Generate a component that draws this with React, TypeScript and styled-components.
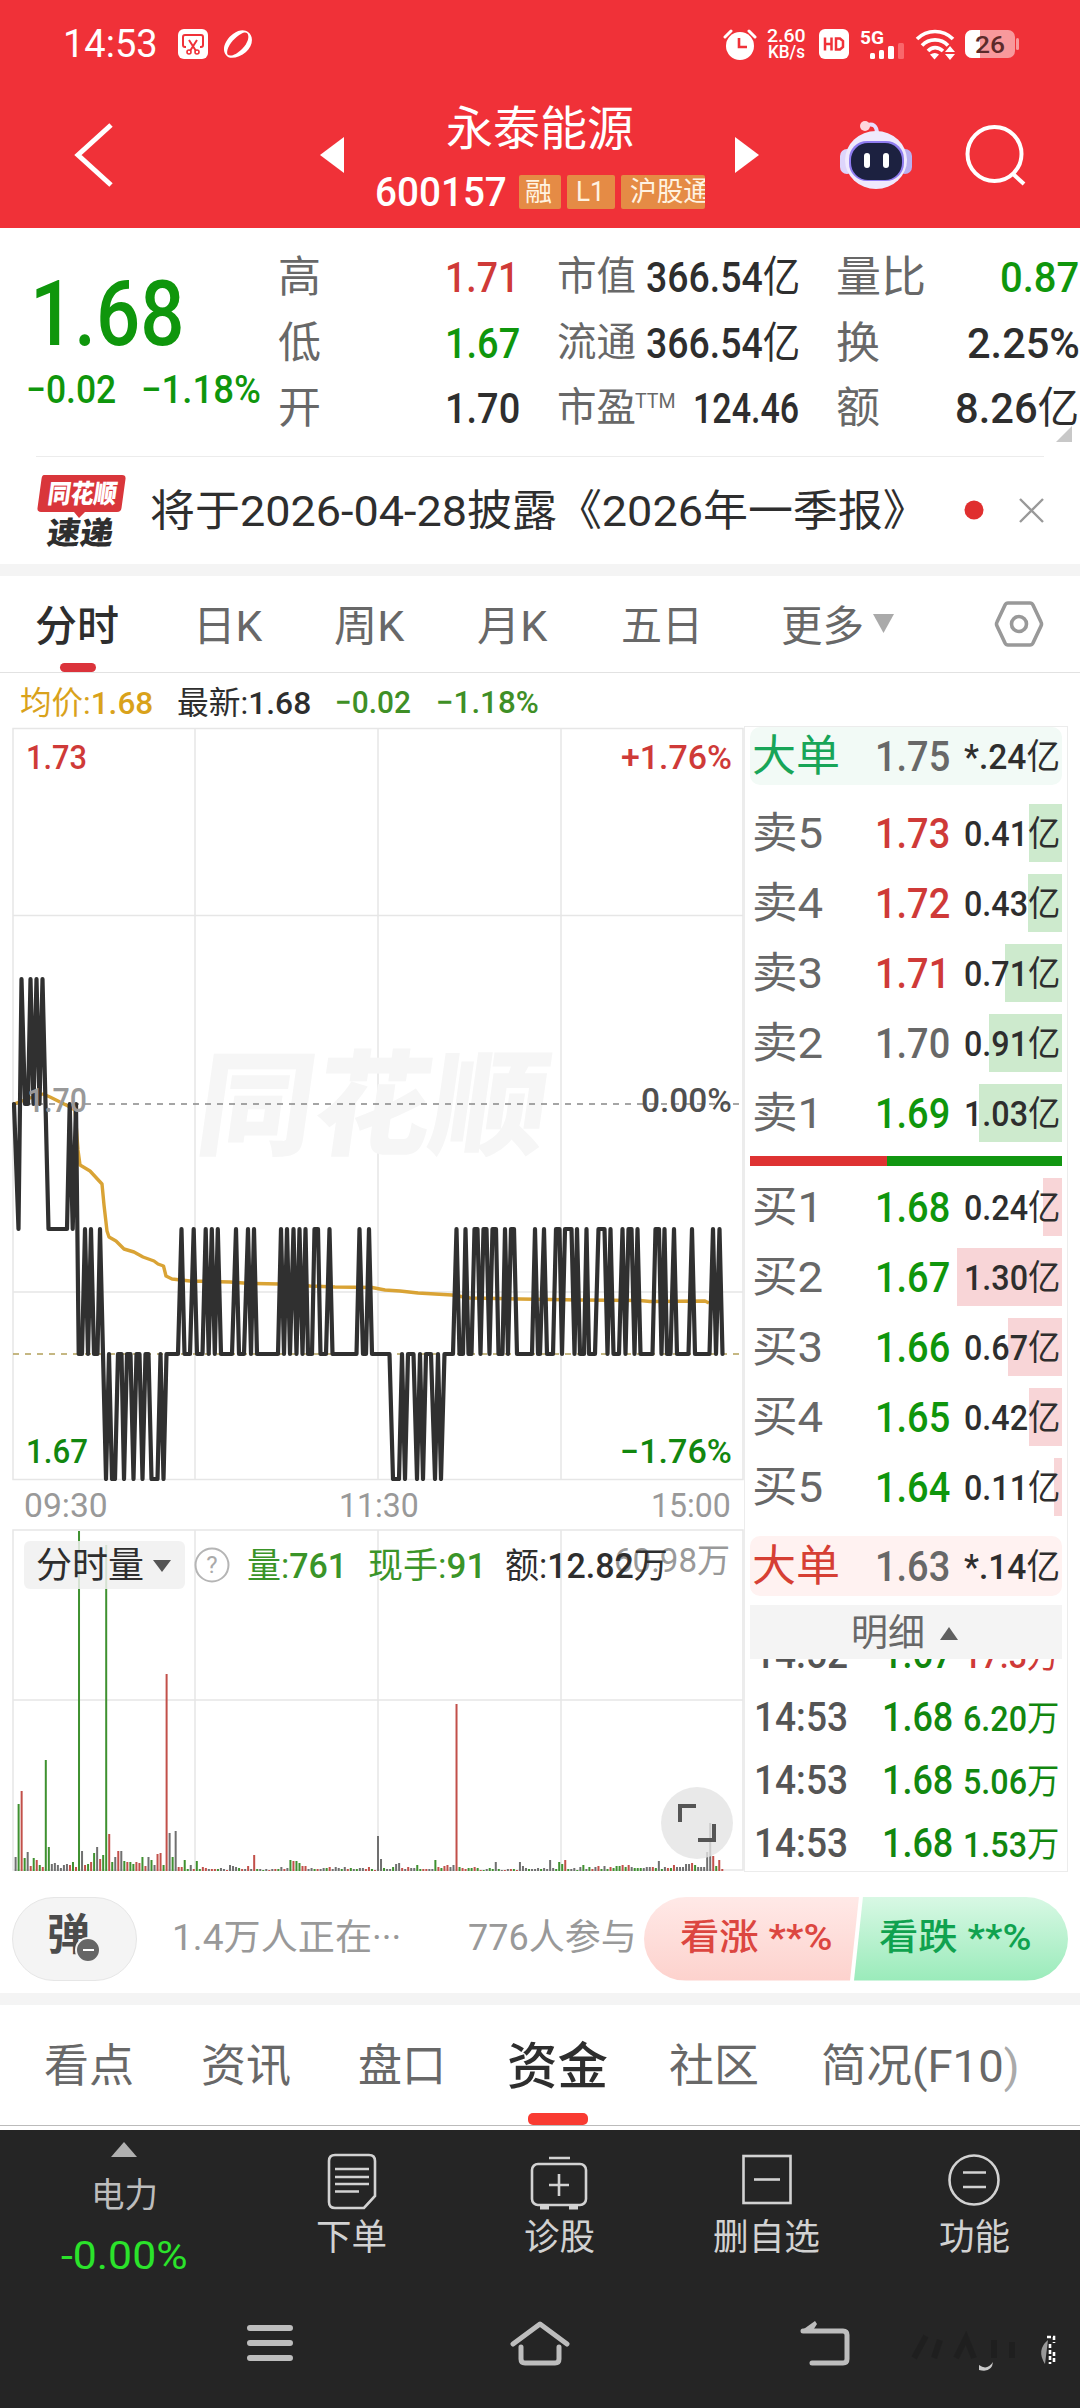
import React, { useLayoutEffect, useRef, useState } from "react";
import styled, { createGlobalStyle } from "styled-components";

const C = {
  red: "#f03138",
  up: "#cf3a38",
  down: "#0f960c",
  ink: "#2e2e2e",
  sub: "#686868",
  mute: "#999",
  line: "#e6e6e6",
  band: "#f4f4f4",
  dark: "#252525",
};

const Global = createGlobalStyle`
  * { box-sizing: border-box; }
  body { margin: 0; background: #fff; font-family: Roboto, "Noto Sans CJK SC", sans-serif; }
  svg { display: block; flex: none; }
`;

/* ---------- fitted label: condenses its text to a given width ---------- */
interface LabelProps { $w: number; $ml?: number; $size: number; $color?: string; $weight?: number; }
const LabelBox = styled.div<LabelProps>`
  flex: none;
  width: ${(p) => p.$w}px;
  margin-left: ${(p) => p.$ml ?? 0}px;
  font-size: ${(p) => p.$size}px;
  line-height: ${(p) => Math.round(p.$size * 1.2)}px;
  height: ${(p) => Math.round(p.$size * 1.2)}px;
  color: ${(p) => p.$color ?? C.ink};
  font-weight: ${(p) => p.$weight ?? 400};
`;
const LabelText = styled.span`
  display: inline-block;
  white-space: pre;
  transform-origin: 0 50%;
`;
interface LProps { w: number; ml?: number; s: number; c?: string; b?: number; children: React.ReactNode; }
function L({ w, ml, s, c, b, children }: LProps) {
  const ref = useRef<HTMLSpanElement>(null);
  const [k, setK] = useState(1);
  useLayoutEffect(() => {
    if (ref.current) setK(w / ref.current.offsetWidth);
  }, [w]);
  return (
    <LabelBox $w={w} $ml={ml} $size={s} $color={c} $weight={b}>
      <LabelText ref={ref} style={{ transform: `scaleX(${k})` }}>{children}</LabelText>
    </LabelBox>
  );
}
const U = styled.span`
  font-size: 1em;
  font-weight: 400;
`;
const Medium = styled.span`
  font-weight: 500;
`;

const Screen = styled.main`
  width: 1080px;
  height: 2408px;
  overflow: hidden;
  display: flex;
  flex-direction: column;
  background: #fff;
`;
const Row = styled.div<{ $h: number; $pl?: number; $pt?: number }>`
  flex: none;
  display: flex;
  align-items: center;
  height: ${(p) => p.$h}px;
  padding-left: ${(p) => p.$pl ?? 0}px;
  padding-top: ${(p) => p.$pt ?? 0}px;
`;
const Gap = styled.div<{ $w: number }>`
  flex: none;
  width: ${(p) => p.$w}px;
`;
const Band = styled.div`
  flex: none;
  height: 12px;
  background: ${C.band};
`;

/* ---------- header ---------- */
const Header = styled.header`
  flex: none;
  height: 228px;
  background: ${C.red};
  color: #fff;
`;
const Speed = styled.div`
  display: flex;
  flex-direction: column;
  justify-content: center;
  width: 40px;
  margin-left: 10px;
`;
const SpeedLine = styled.div`
  height: 16px;
  display: flex;
  align-items: center;
`;
const HeaderNav = styled.div`
  display: flex;
  align-items: center;
  height: 134px;
  padding-left: 74px;
`;
const TitleBlock = styled.div`
  display: flex;
  flex-direction: column;
  width: 390px;
  padding: 16px 0 0 31px;
`;
const Tag = styled.div<{ $w: number; $ml: number }>`
  flex: none;
  width: ${(p) => p.$w}px;
  margin-left: ${(p) => p.$ml}px;
  height: 34px;
  background: #e58b45;
  border-radius: 2px;
  display: flex;
  align-items: center;
  overflow: hidden;
`;

function StatusBar() {
  return (
    <Row $h={88} $pl={63}>
      <L w={95} s={38} c="#fff">14:53</L>
      <Gap $w={20} />
      <svg width="30" height="30" viewBox="0 0 30 30">
        <rect width="30" height="30" rx="6" fill="#fff" />
        <path d="M8 18H7a2 2 0 0 1-2-2V8a2 2 0 0 1 2-2h16a2 2 0 0 1 2 2v8a2 2 0 0 1-2 2h-1" fill="none" stroke={C.red} strokeWidth="2" />
        <path d="M11 11l7 11M19 11l-7 11" stroke={C.red} strokeWidth="2" />
        <circle cx="11" cy="23" r="2" fill="none" stroke={C.red} strokeWidth="1.6" />
        <circle cx="19" cy="23" r="2" fill="none" stroke={C.red} strokeWidth="1.6" />
      </svg>
      <Gap $w={15} />
      <svg width="31" height="30" viewBox="0 0 31 30">
        <path d="M25 3C31 7 30 17 23 23S6 31 3 26C-2 20 3 10 10 5s12-4 15-2z" fill="#fff" />
        <path d="M24 4c3 3 1 10-5 16S7 28 4.500 25.500C3 22 6 15 12 9.500S22 2.500 24 4z" fill={C.red} />
      </svg>
      <Gap $w={469} />
      <svg width="34" height="31" viewBox="0 0 34 31">
        <circle cx="17" cy="17" r="14" fill="#fff" />
        <path d="M2 8l6-6M32 8l-6-6" stroke="#fff" strokeWidth="3" strokeLinecap="round" />
        <path d="M16 9v9h8" fill="none" stroke={C.red} strokeWidth="2.6" />
      </svg>
      <Speed>
        <SpeedLine><L w={39} s={18} c="#fff" b={500}>2.60</L></SpeedLine>
        <SpeedLine><L w={37} ml={1} s={18} c="#fff" b={500}>KB/s</L></SpeedLine>
      </Speed>
      <Gap $w={12} />
      <svg width="30" height="30" viewBox="0 0 30 30">
        <rect width="30" height="30" rx="6" fill="#fff" />
        <path d="M6 8.500v13M6 15h6M12.500 8.500v13M17 9.500h4l3 2.500v6l-3 2.500h-4z" fill="none" stroke={C.red} strokeWidth="2.500" />
      </svg>
      <Gap $w={11} />
      <svg width="46" height="31" viewBox="0 0 46 31">
        <text x="0" y="14.500" fontSize="19" fontWeight="700" fill="#fff" textLength="24" lengthAdjust="spacingAndGlyphs">5G</text>
        <rect x="10" y="24" width="5" height="6" rx="1.500" fill="#fff" />
        <rect x="19" y="21" width="5" height="9" rx="1.500" fill="#fff" />
        <rect x="28" y="17" width="6" height="13" rx="1.500" fill="#fff" />
        <rect x="38" y="14" width="6" height="16" rx="1.500" fill="#f9676b" />
      </svg>
      <Gap $w={9} />
      <svg width="40" height="31" viewBox="0 0 40 31">
        <g fill="none" stroke="#fff" strokeWidth="3.600">
          <path d="M2 10c10-10 26-10 36 0" />
          <path d="M7 16.500c7-7.500 19-7.500 26 0" />
          <path d="M13 22c4-4.500 10-4.500 15 0" />
        </g>
        <path d="M15 25.500q5-3 9 0l-4.500 5z" fill="#fff" />
        <path d="M35 17l5 6H30zM35 31l5-6H30z" fill="#fff" />
      </svg>
      <Gap $w={10} />
      <svg width="54" height="28" viewBox="0 0 54 28">
        <rect width="50" height="28" rx="7" fill="#f8999c" />
        <path d="M7 0h8v28H7a7 7 0 0 1-7-7V7a7 7 0 0 1 7-7z" fill="#fff" />
        <rect x="51" y="8" width="3" height="12" rx="1.500" fill="#f8999c" />
        <text x="10" y="22.500" fontSize="24" fontWeight="500" fill="#5c2a2a" textLength="30" lengthAdjust="spacingAndGlyphs">26</text>
      </svg>
    </Row>
  );
}

function StockHeader() {
  return (
    <Header>
      <StatusBar />
      <HeaderNav>
        <svg width="40" height="64" viewBox="0 0 40 64"><path d="M37 2L4 32l33 30" fill="none" stroke="#fff" strokeWidth="5" /></svg>
        <Gap $w={206} />
        <svg width="25" height="36" viewBox="0 0 25 36"><path d="M24 0v36L0 18z" fill="#fff" /></svg>
        <TitleBlock>
          <Row $h={56} $pl={70}><L w={188} s={47} c="#fff">永泰能源</L></Row>
          <Row $h={69} $pt={2}>
            <L w={132} ml={-1} s={41} c="#fff" b={500}>600157</L>
            <Tag $w={42} $ml={12}><L w={27} ml={6} s={26} c="#fff3e2">融</L></Tag>
            <Tag $w={48} $ml={6}><L w={29} ml={9} s={27} c="#fff3e2">L1</L></Tag>
            <Tag $w={84} $ml={6}><L w={80} ml={9} s={27} c="#fff3e2">沪股通</L></Tag>
          </Row>
        </TitleBlock>
        <svg width="25" height="36" viewBox="0 0 25 36"><path d="M0 0v36l24-18z" fill="#fff" /></svg>
        <Gap $w={79} />
        <svg width="74" height="70" viewBox="0 0 74 70">
          <path d="M26 6c8-4 12 0 12 8" fill="none" stroke="#e9dcff" strokeWidth="4" />
          <circle cx="26" cy="6" r="5" fill="#ffd7de" />
          <rect x="1" y="29" width="14" height="25" rx="7" fill="#ddd5fb" />
          <rect x="59" y="29" width="14" height="25" rx="7" fill="#b9b0f0" />
          <ellipse cx="37" cy="40" rx="31" ry="29" fill="#efe9fd" />
          <rect x="10" y="21" width="55" height="40" rx="18" fill="#8f7cf0" />
          <rect x="12" y="23" width="51" height="37" rx="17" fill="#1c2140" />
          <rect x="25" y="33" width="6" height="15" rx="3" fill="#fff" />
          <rect x="44" y="33" width="6" height="15" rx="3" fill="#fff" />
        </svg>
        <Gap $w={51} />
        <svg width="64" height="62" viewBox="0 0 64 62">
          <circle cx="30.500" cy="30" r="27" fill="none" stroke="#fff" strokeWidth="4" />
          <path d="M48 49l12 11" stroke="#fff" strokeWidth="4" />
        </svg>
      </HeaderNav>
    </Header>
  );
}

/* ---------- quote ---------- */
const Quote = styled.section`
  flex: none;
  position: relative;
  display: flex;
  height: 228px;
`;
const PricePane = styled.div`
  width: 280px;
  padding-top: 39px;
`;
const StatPane = styled.div`
  padding-top: 16px;
`;
const Sup = styled.div`
  display: flex;
  padding-bottom: 14px;
`;
const Corner = styled.i`
  position: absolute;
  right: 8px;
  bottom: 14px;
  border: 8.5px solid transparent;
  border-right-color: #c8c8c8;
  border-bottom-color: #c8c8c8;
`;
const Divider = styled.div`
  flex: none;
  height: 1px;
  margin: 0 36px;
  background: #ececec;
`;
function QuotePanel() {
  return (
    <Quote>
      <PricePane>
        <Row $h={92} $pl={30} $pt={2}><L w={154} s={91} c={C.down} b={500}>1.68</L></Row>
        <Row $h={62} $pl={26}>
          <L w={90} s={39} c={C.down} b={500}>−0.02</L>
          <L w={120} ml={25} s={39} c={C.down} b={500}>−1.18%</L>
        </Row>
      </PricePane>
      <StatPane>
        <Row $h={66}>
          <L w={43} s={43} c={C.sub}>高</L><L w={74} ml={124} s={43} c={C.up} b={500}>1.71</L>
          <L w={79} ml={38} s={40} c={C.sub}>市值</L><L w={154} ml={10} s={43} b={500}>366.54<U>亿</U></L>
          <L w={90} ml={36} s={43} c={C.sub}>量比</L><L w={79} ml={74} s={43} c={C.down} b={500}>0.87</L>
        </Row>
        <Row $h={66}>
          <L w={43} s={43} c={C.sub}>低</L><L w={75} ml={124} s={43} c={C.down} b={500}>1.67</L>
          <L w={79} ml={37} s={40} c={C.sub}>流通</L><L w={154} ml={10} s={43} b={500}>366.54<U>亿</U></L>
          <L w={44} ml={36} s={43} c={C.sub}>换</L><L w={113} ml={87} s={43} b={500}>2.25%</L>
        </Row>
        <Row $h={64}>
          <L w={43} s={43} c={C.sub}>开</L><L w={75} ml={124} s={43} b={500}>1.70</L>
          <L w={79} ml={37} s={40} c={C.sub}>市盈</L>
          <Sup><L w={41} ml={-1} s={21} c={C.sub}>TTM</L></Sup>
          <L w={106} ml={17} s={43} b={500}>124.46</L>
          <L w={44} ml={37} s={43} c={C.sub}>额</L><L w={124} ml={75} s={43} b={500}>8.26<U>亿</U></L>
        </Row>
      </StatPane>
      <Corner />
    </Quote>
  );
}

function News() {
  return (
    <Row $h={107} $pl={36}>
      <svg width="92" height="76" viewBox="0 0 92 76">
        <path d="M8 2h78q4 0 3.500 4l-4 29q-.500 4-4.500 4H49l-6 6-5-6H5q-4 0-3.500-4l4-29q.500-4 2.500-4z" fill="#d9363b" />
        <g transform="skewX(-8)" fontWeight="900">
          <text x="15" y="30" fontSize="26" fill="#fff" textLength="69" lengthAdjust="spacingAndGlyphs">同花顺</text>
          <text x="20" y="71" fontSize="31" fill={C.ink} textLength="66" lengthAdjust="spacingAndGlyphs">速递</text>
        </g>
      </svg>
      <L w={778} ml={22} s={43}>将于2026-04-28披露《2026年一季报》</L>
      <Gap $w={36} />
      <svg width="80" height="26" viewBox="0 0 80 26">
        <circle cx="10" cy="12" r="9.500" fill="#e02f2f" />
        <path d="M56 1l23 23M79 1L56 24" stroke="#999" strokeWidth="2.400" />
      </svg>
    </Row>
  );
}

/* ---------- period tabs ---------- */
const PeriodTabs = styled.nav`
  flex: none;
  position: relative;
  display: flex;
  align-items: center;
  height: 97px;
  padding: 6px 0 0 35px;
  border-bottom: 1px solid #e2e2e2;
  & > svg { margin-bottom: 6px; }
`;
const Mark = styled.i<{ $x: number; $w: number; $h: number; $c: string }>`
  position: absolute;
  bottom: 0;
  left: ${(p) => p.$x}px;
  width: ${(p) => p.$w}px;
  height: ${(p) => p.$h}px;
  border-radius: 5px;
  background: ${(p) => p.$c};
`;
function Periods() {
  return (
    <PeriodTabs>
      <L w={84} s={42} b={500}>分时</L>
      <L w={69} ml={74} s={42} c={C.sub}>日K</L>
      <L w={70} ml={72} s={42} c={C.sub}>周K</L>
      <L w={70} ml={73} s={42} c={C.sub}>月K</L>
      <L w={82} ml={74} s={42} c={C.sub}>五日</L>
      <L w={83} ml={78} s={42} c={C.sub}>更多</L>
      <Gap $w={8} />
      <svg width="24" height="20" viewBox="0 0 24 20"><path d="M1 0h21L11.500 19z" fill="#aaa" /></svg>
      <Gap $w={98} />
      <svg width="50" height="48" viewBox="0 0 50 48">
        <path d="M14 3h22q2 0 3 2l8 17q1 2 0 4l-8 17q-1 2-3 2H14q-2 0-3-2L3 26q-1-2 0-4l8-17q1-2 3-2z" fill="none" stroke="#999" strokeWidth="3.600" />
        <circle cx="25" cy="24" r="7.500" fill="none" stroke="#999" strokeWidth="3.600" />
      </svg>
      <Mark $x={60} $w={36} $h={9} $c="#db333b" />
    </PeriodTabs>
  );
}

/* ---------- charts ---------- */
const Market = styled.section`
  flex: none;
  display: flex;
  height: 1199px;
`;
const ChartColumn = styled.div`
  flex: none;
  width: 744px;
  padding-left: 12px;
`;

/* Price path as "x:level" points; level is hundredths above 1.60. */
const PRICE =
  "14:10 18.5:9 21.5:11 25:10 28:10 30.5:11 33.5:10 36.5:11 39.5:10 42.5:11 48.5:9 67:9 69.7:10 72.7:9 76:10 78.7:8 82:8 85:9 88:8 91:9 94:8 97.5:8 100:9 103:8 106:7 109:8 112:7 115:7 118:8 121.5:8 124:7 127:8 130.5:8 133.5:7 136.5:8 139.5:8 142.5:7 145.5:8 148.5:8 151.5:7 157.5:7 160.5:8 163.5:7 166.5:8 178:8 181.5:9 184.5:8 190:8 193.7:9 197:8 202.5:8 205.7:9 208.7:8 211.8:9 214.8:8 217.8:9 221:8 232:8 236:9 239:8 244:8 248:9 251:8 254:9 257:8 278:8 281:9 284:8 287:9 290:8 293.5:9 296.5:8 299.5:9 302.5:8 305.5:9 308:8 312:8 314.5:9 318:9 320.5:8 326:8 329.5:9 332.5:8 356.5:8 359.5:9 363:8 366:8 369:9 372:8 389.5:8 393:7 399:7 402:8 405:7 408:8 413.5:8 417:7 420:8 423:7 426:8 431:8 435:7 438:8 441:7 444.5:8 453:8 456.5:9 459.5:8 463:8 465.5:9 468.5:8 471.5:8 474.5:9 477.5:9 480.5:8 483.5:9 486.5:9 489.5:8 492.5:9 496:9 498.5:8 502.5:8 505:9 508:8 511:9 514:9 517:8 532:8 535:9 538:8 540:8 544:9 547:8 553:8 556:9 559.5:9 562:8 565:9 571.5:9 574.5:8 577:9 580:8 584:8 586.5:9 589:8 595:8 598.5:9 604.5:9 607.5:8 610.5:9 613.5:8 619:8 622.5:9 625.5:8 628.5:9 631.5:9 634.5:8 637.5:9 640.5:8 652.5:8 655.5:9 659:9 661.5:8 664.5:9 667:8 670.5:8 674:9 677:8 688.5:8 692:9 695:8 709.5:8 713:9 716:8 719.5:9 722.5:8";
const pricePoints = PRICE.split(" ")
  .map((p) => p.split(":").map(Number))
  .map(([x, l]) => `${x},${1104 - (l - 10) * 125}`)
  .join(" ");
const AVERAGE =
  "14,1104 30,1098 43,1094 50,1097 60,1102 68,1106 75,1110 78,1150 80,1165 90,1171 102,1184 104,1205 107,1231 109,1237 116,1241 124,1249 134,1252 143,1257 154,1261 158,1264 163.5,1266 166,1276 172,1279 190,1281 230,1282 250,1283.5 280,1284 310,1286 335,1287 372,1287.5 385,1290 400,1291 418,1293 452,1295 470,1298 520,1299 580,1300 640,1300.5 650,1301.5 705,1301 709,1303";

const Tx = ({ x, y, w, c, children }: { x: number; y: number; w: number; c: string; children: string }) => (
  <text x={x} y={y} fontSize="33" fontWeight="500" fill={c} textLength={w} lengthAdjust="spacingAndGlyphs">{children}</text>
);

function PriceChart() {
  return (
    <svg width="732" height="754" viewBox="12 727 732 754">
      <g fill="none" stroke={C.line} strokeWidth="1.500">
        <rect x="13" y="728.500" width="730" height="751" />
        <path d="M195 729v751M378 729v751M561 729v751M13 915.500h730M13 1292h730" />
      </g>
      <g fill="#f6f6f6" fontWeight="900" transform="translate(193 1146) skewX(-8)">
        <text fontSize="114" textLength="350" lengthAdjust="spacingAndGlyphs">同花顺</text>
      </g>
      <path d="M13 1104h726" stroke="#888" strokeWidth="1.700" strokeDasharray="6 6" />
      <path d="M13 1354h726" stroke="#b3a05a" strokeWidth="1.700" strokeDasharray="6 6" />
      <polyline points={AVERAGE} fill="none" stroke="#d9a335" strokeWidth="3.400" strokeLinejoin="round" />
      <polyline points={pricePoints} fill="none" stroke="#303030" strokeWidth="4.200" strokeLinejoin="round" strokeLinecap="round" />
      <Tx x={26} y={769} w={61} c={C.up}>1.73</Tx>
      <Tx x={621} y={769} w={111} c={C.up}>+1.76%</Tx>
      <Tx x={27} y={1112} w={60} c="#999">1.70</Tx>
      <Tx x={641} y={1112} w={91} c="#505050">0.00%</Tx>
      <Tx x={26} y={1463} w={62} c="#12870f">1.67</Tx>
      <Tx x={620} y={1463} w={112} c="#12870f">−1.76%</Tx>
    </svg>
  );
}

const VolumeBox = styled.div`
  position: relative;
  height: 343px;
`;
const VolumeBar = styled.div`
  position: absolute;
  inset: 12px 0 auto 12px;
  display: flex;
  align-items: center;
  height: 48px;
`;
const Picker = styled.div`
  flex: none;
  width: 161px;
  height: 48px;
  border-radius: 6px;
  background: rgba(240, 240, 240, 0.85);
  display: flex;
  align-items: center;
  padding-top: 2px;
`;
const Figures = styled.div`
  display: flex;
  padding-top: 3px;
`;
const Expand = styled.div`
  position: absolute;
  left: 649px;
  top: 258px;
  width: 72px;
  height: 72px;
  border-radius: 50%;
  background: rgba(228, 228, 228, 0.8);
  display: grid;
  place-items: center;
`;

/* Minute volumes: height in px followed by r (up), g (down) or k (flat). */
const MORNING =
  "14k 67g 80r 13g 19k 5r 13g 11r 6g 4r 111g 24g 7k 8k 6k 3k 6k 7k 6r 9g 4r 340g 20k 6r 7g 9r 18g 24k 12r 16g 326g 37r 9g 14k 20r 20k 10g 9r 9g 7g 9r 8r 14g 5r 14k 11g 6k 17r 18r 6g 197r 38k 14g 40k 4r 4r 11g 2g 6k 2r 10g 2g 4r 3r 2k 2r 2r 2g 3k 2k 1r 6k 5k 4k 3g 2r 2k 5r 2k 16r 2g 2k 1g 2k 1r 2k 2r 2g 4k 2r 3k 11g 10r 10g 8g 5r 5r 2k 3k 2g 2r 2k 3k 3g 4r 2k 4k 3k 2g 4k 2r 3g 2k 2g 3k 3k 2r 4r 2g 1r";
const AFTERNOON =
  "35k 12k 3g 2k 2k 4g 7k 8k 3r 2k 4r 3k 3k 6g 2g 2r 2r 2k 2k 11g 4r 3g 5r 6r 4k 6k 167r 4g 3r 2r 3g 3g 4r 3g 1r 1g 2k 3g 2g 9k 2g 1k 1r 2k 2r 2g 1r 9k 5k 3k 2g 2k 2k 3k 2g 3k 2k 11k 3k 2g 9g 7g 11r 2g 2k 3k 1g 4k 6g 2k 4g 2r 4k 5r 2g 5k 2g 4r 3g 5g 5g 6r 4g 6r 4k 3g 3g 3g 3k 4k 4k 4r 3g 10k 2g 4k 3r 3g 6r 4k 4k 4k 7k 7k 8r 6g 4k 4k 4k 19k 48k 15r 5g 11r 2r";
const VOLUMES = [...MORNING.split(" "), ...AFTERNOON.split(" ")];
const BAR: Record<string, string> = { r: "#c2504a", g: "#3f9130", k: "#707070" };

function VolumeChart() {
  return (
    <VolumeBox>
      <svg width="732" height="343" viewBox="12 1529 732 343">
        <g fill="none" stroke={C.line} strokeWidth="1.500">
          <rect x="13" y="1530" width="730" height="340" />
          <path d="M195 1530v340M378 1530v340M561 1530v340M13 1700h730" />
        </g>
        {VOLUMES.map((v, i) => {
          const h = parseFloat(v);
          return <rect key={i} x={14.600 + i * 3.020} y={1871 - h} width="2" height={h} fill={BAR[v.slice(-1)]} />;
        })}
        <text x="614" y="1572" fontSize="33" fill="#999" textLength="116" lengthAdjust="spacingAndGlyphs">60.98万</text>
      </svg>
      <VolumeBar>
        <Picker>
          <L w={108} ml={12} s={36}>分时量</L>
          <Gap $w={9} />
          <svg width="19" height="13" viewBox="0 0 19 13"><path d="M0 0h18L9 12z" fill="#555" /></svg>
        </Picker>
        <Gap $w={9} />
        <svg width="36" height="36" viewBox="0 0 36 36">
          <circle cx="18" cy="18" r="16.500" fill="none" stroke="#b5b5b5" strokeWidth="2" />
          <text x="18" y="26" fontSize="24" textAnchor="middle" fill="#aaa">?</text>
        </svg>
        <Figures>
          <L w={100} ml={17} s={35} c="#3a9428">量:<Medium>761</Medium></L>
          <L w={118} ml={21} s={35} c="#3a9428">现手:<Medium>91</Medium></L>
          <L w={163} ml={19} s={35}>额:<Medium>12.82</Medium>万</L>
        </Figures>
      </VolumeBar>
      <Expand>
        <svg width="38" height="38" viewBox="0 0 38 38"><path d="M2 18V2h16M20 36h16V20" fill="none" stroke="#555" strokeWidth="4" /></svg>
      </Expand>
    </VolumeBox>
  );
}

function Charts() {
  return (
    <ChartColumn>
      <Row $h={54} $pl={8} $pt={5}>
        <L w={133} s={32} c="#d9a21b">均价:<Medium>1.68</Medium></L>
        <L w={134} ml={24} s={32}>最新:<Medium>1.68</Medium></L>
        <L w={76} ml={24} s={31} c="#3f8f26" b={500}>−0.02</L>
        <L w={103} ml={25} s={31} c="#3f8f26" b={500}>−1.18%</L>
      </Row>
      <PriceChart />
      <Row $h={48} $pl={12}>
        <L w={84} s={34} c="#999">09:30</L>
        <L w={80} ml={231} s={34} c="#999">11:30</L>
        <L w={80} ml={232} s={34} c="#999">15:00</L>
      </Row>
      <VolumeChart />
    </ChartColumn>
  );
}

/* ---------- order book ---------- */
const Book = styled.aside`
  flex: none;
  width: 324px;
  height: 1146px;
  margin-top: 53px;
  border: 1px solid #ececec;
  padding: 0 5px;
`;
const BookRow = styled.div<{ $bg?: string; $h?: number }>`
  display: flex;
  align-items: center;
  height: ${(p) => p.$h ?? 58}px;
  padding-left: 2px;
  border-radius: ${(p) => (p.$bg ? 10 : 0)}px;
  background: ${(p) => p.$bg ?? "none"};
`;
const Level = styled(BookRow)<{ $bar: number; $tint: string }>`
  margin-bottom: 12px;
  background: linear-gradient(${(p) => p.$tint}, ${(p) => p.$tint}) right / ${(p) => p.$bar}px 100% no-repeat;
`;
const Levels = styled.div<{ $h: number; $pt: number }>`
  height: ${(p) => p.$h}px;
  padding-top: ${(p) => p.$pt}px;
`;
const Amount = styled.div`
  padding-top: 4px;
`;
const Ratio = styled.div`
  height: 10px;
  background: linear-gradient(90deg, #de3232 137px, #119611 137px);
`;
const DetailHead = styled.div`
  position: relative;
  height: 54px;
  margin-top: 9px;
  display: flex;
  align-items: center;
  padding: 3px 0 0 101px;
  background: #f4f4f4;
`;
const Trades = styled.div`
  height: 211px;
  overflow: hidden;
  padding-left: 4px;
`;
const Trade = styled.div<{ $first?: boolean }>`
  display: flex;
  align-items: center;
  height: 63px;
  margin-top: ${(p) => (p.$first ? -36 : 0)}px;
`;

const SELL: [string, string, string, string, number][] = [
  ["卖5", "1.73", C.up, "0.41", 33],
  ["卖4", "1.72", C.up, "0.43", 34],
  ["卖3", "1.71", C.up, "0.71", 57],
  ["卖2", "1.70", C.sub, "0.91", 73],
  ["卖1", "1.69", C.down, "1.03", 83],
];
const BUY: [string, string, string, string, number][] = [
  ["买1", "1.68", C.down, "0.24", 19],
  ["买2", "1.67", C.down, "1.30", 105],
  ["买3", "1.66", C.down, "0.67", 54],
  ["买4", "1.65", C.down, "0.42", 33],
  ["买5", "1.64", C.down, "0.11", 8],
];
const TRADES: [string, string, string, string][] = [
  ["14:52", "1.67", "17.3", C.up],
  ["14:53", "1.68", "6.20", "#12870f"],
  ["14:53", "1.68", "5.06", "#12870f"],
  ["14:53", "1.68", "1.53", "#12870f"],
];

const bookLevel = (tint: string) => ([n, p, c, v, bar]: [string, string, string, string, number]) => (
  <Level key={n} $bar={bar} $tint={tint}>
    <L w={71} s={43} c={C.sub}>{n}</L>
    <L w={75} ml={52} s={43} c={c} b={500}>{p}</L>
    <Amount><L w={96} ml={14} s={35} b={500}>{v}<U>亿</U></L></Amount>
  </Level>
);

function OrderBook() {
  return (
    <Book>
      <BookRow $bg="#f2faf6">
        <L w={88} s={43} c="#18a558">大单</L>
        <L w={75} ml={35} s={43} c={C.sub} b={500}>1.75</L>
        <Amount><L w={96} ml={14} s={35} b={500}>*.24<U>亿</U></L></Amount>
      </BookRow>
      <Levels $h={371} $pt={19}>{SELL.map(bookLevel("#cdeacd"))}</Levels>
      <Ratio />
      <Levels $h={370} $pt={12}>{BUY.map(bookLevel("#f8d5d7"))}</Levels>
      <BookRow $bg="#fff2f1" $h={60}>
        <L w={88} s={43} c="#d63f34">大单</L>
        <L w={75} ml={35} s={43} c={C.sub} b={500}>1.63</L>
        <Amount><L w={96} ml={14} s={35} b={500}>*.14<U>亿</U></L></Amount>
      </BookRow>
      <DetailHead>
        <L w={74} s={37} c={C.sub}>明细</L>
        <Gap $w={15} />
        <svg width="18" height="13" viewBox="0 0 18 13"><path d="M0 13h18L9 0z" fill="#606060" /></svg>
      </DetailHead>
      <Trades>
        {TRADES.map(([t, p, v, c], i) => (
          <Trade key={i} $first={i === 0}>
            <L w={94} s={41} c="#555" b={500}>{t}</L>
            <L w={71} ml={34} s={41} c="#12870f" b={500}>{p}</L>
            <Amount><L w={96} ml={10} s={35} c={c} b={500}>{v}<U>万</U></L></Amount>
          </Trade>
        ))}
      </Trades>
    </Book>
  );
}

/* ---------- bullet comments and vote ---------- */
const Danmu = styled.div`
  flex: none;
  position: relative;
  width: 125px;
  height: 84px;
  border-radius: 42px;
  border: 1px solid #e6e6e6;
  background: #f4f4f4;
  padding: 11px 0 0 34px;
`;
const Minus = styled.i`
  position: absolute;
  left: 62px;
  top: 39px;
  width: 26px;
  height: 26px;
  border: 2px solid #f4f4f4;
  border-radius: 50%;
  background: linear-gradient(#fff, #fff) center / 11px 2px no-repeat #666;
`;
const Vote = styled.div<{ $up?: boolean }>`
  flex: none;
  width: ${(p) => (p.$up ? 215 : 214)}px;
  height: 84px;
  display: flex;
  align-items: center;
  padding-left: ${(p) => (p.$up ? 36 : 25)}px;
  margin-left: ${(p) => (p.$up ? 7 : -5)}px;
  border-radius: ${(p) => (p.$up ? "42px 0 0 42px" : "0 42px 42px 0")};
  clip-path: ${(p) => (p.$up ? "polygon(0 0, 100% 0, calc(100% - 9px) 100%, 0 100%)" : "polygon(9px 0, 100% 0, 100% 100%, 0 100%)")};
  background: ${(p) => (p.$up ? "linear-gradient(#ffe9e7, #fdd2cd)" : "linear-gradient(#d8f8e4, #9aebba)")};
`;

function Interact() {
  return (
    <Row $h={121} $pl={12} $pt={12}>
      <Danmu><L w={43} s={43} c="#4c4c4c" b={700}>弹</L><Minus /></Danmu>
      <L w={229} ml={35} s={36} c={C.mute}>1.4万人正在···</L>
      <L w={169} ml={67} s={36} c={C.mute}>776人参与</L>
      <Vote $up><L w={152} s={36} c="#dc4640" b={500}>看涨 **%</L></Vote>
      <Vote><L w={152} s={36} c="#10a24f" b={500}>看跌 **%</L></Vote>
    </Row>
  );
}

const SectionTabs = styled.nav`
  flex: none;
  position: relative;
  display: flex;
  align-items: center;
  height: 121px;
  padding: 4px 0 0 44px;
  border-bottom: 1px solid #bbb;
`;
function Sections() {
  return (
    <SectionTabs>
      <L w={90} s={45} c={C.sub}>看点</L>
      <L w={90} ml={67} s={45} c={C.sub}>资讯</L>
      <L w={88} ml={67} s={45} c={C.sub}>盘口</L>
      <L w={101} ml={61} s={50} b={500}>资金</L>
      <L w={90} ml={61} s={45} c={C.sub}>社区</L>
      <L w={199} ml={62} s={45} c={C.sub}>简况(F10<span style={{ color: "#aaa" }}>)</span></L>
      <Mark $x={528} $w={60} $h={12} $c="#f93b32" />
    </SectionTabs>
  );
}

/* ---------- bottom ---------- */
const Footer = styled.footer`
  flex: none;
  height: 279px;
  margin-top: 4px;
  background: ${C.dark};
`;
const Actions = styled.div`
  display: flex;
  height: 160px;
`;
const Sector = styled.div`
  flex: none;
  width: 248px;
  display: flex;
  flex-direction: column;
  align-items: center;
  padding: 12px 0 0 0;
`;
const Action = styled.div`
  flex: none;
  width: 207.5px;
  display: flex;
  flex-direction: column;
  align-items: center;
`;
const IconBox = styled.div`
  height: 80px;
  display: flex;
  align-items: flex-end;
  margin-bottom: 7px;
`;
const System = styled.div`
  display: flex;
  align-items: center;
  height: 106px;
  padding-left: 246px;
`;
const g = { fill: "none", stroke: "#d2d2d2", strokeWidth: 2.6 };
const ACTIONS: [string, number, React.ReactNode][] = [
  ["下单", 71, <svg width="50" height="58" viewBox="0 0 50 58"><g {...g}><path d="M8 3h34q6 0 6 6v35L37 56H8q-6 0-6-6V9q0-6 6-6z" /><path d="M8 17h34M8 25h34M8 32h34M8 39.500h24" /></g></svg>],
  ["诊股", 71, <svg width="58" height="58" viewBox="0 0 58 58"><g {...g}><rect x="2" y="12" width="54" height="41" rx="6" /><path d="M19 6h21M29 22v22M19 33h20" /><path d="M10 55.500h9M39 55.500h9" strokeWidth="4" /></g></svg>],
  ["删自选", 107, <svg width="50" height="60" viewBox="0 0 50 60"><g {...g}><rect x="1.500" y="6" width="47" height="47" /><path d="M12 29.500h26" /></g></svg>],
  ["功能", 71, <svg width="52" height="60" viewBox="0 0 52 60"><g {...g}><circle cx="26" cy="30" r="24.500" /><path d="M15 22.500h23M15 37h23" /></g></svg>],
];

function Bottom() {
  return (
    <Footer>
      <Actions>
        <Sector>
          <svg width="26" height="15" viewBox="0 0 26 15"><path d="M0 15h26L13 0z" fill="#b0b0b0" /></svg>
          <Row $h={76}><L w={67} s={34} c="#bdbdbd">电力</L></Row>
          <Row $h={46}><L w={126} s={38} c="#2be32b">-0.00%</L></Row>
        </Sector>
        {ACTIONS.map(([name, w, icon]) => (
          <Action key={name}>
            <IconBox>{icon}</IconBox>
            <L w={w} s={36} c="#d2d2d2">{name}</L>
          </Action>
        ))}
      </Actions>
      <System>
        <svg width="48" height="40" viewBox="0 0 48 40"><path d="M4 5h40M4 20h40M4 35h40" stroke="#bdbdbd" strokeWidth="6" strokeLinecap="round" /></svg>
        <Gap $w={216} />
        <svg width="60" height="46" viewBox="0 0 60 46">
          <path d="M3 24L30 4l27 20M11 27v12q0 4 4 4h30q4 0 4-4V27" fill="none" stroke="#bdbdbd" strokeWidth="5" strokeLinejoin="round" strokeLinecap="round" />
        </svg>
        <Gap $w={230} />
        <svg width="50" height="46" viewBox="0 0 50 46">
          <path d="M3 11h40q4 0 4 4v24q0 4-4 4H12" fill="none" stroke="#bdbdbd" strokeWidth="5" strokeLinecap="round" />
          <path d="M1 11L15 1l2 3-5 8z" fill="#bdbdbd" />
        </svg>
        <Gap $w={56} />
        <svg width="152" height="66" viewBox="0 -14 152 66">
          <path d="M8 34l12-22M28 34l6-18M50 34l10-20 8 20M88 34V16M106 34V18" stroke="#1d1d1d" strokeWidth="6" fill="none" opacity=".6" />
          <path d="M73 41q8 6 14-3-1 11-14 8z" fill="#c8c8c8" />
          <path d="M142 16q-12 10-3 24z" fill="#9a9a9a" />
          <path d="M141 13h7v6M144 20v20M148 28v12" stroke="#fff" strokeWidth="2.600" strokeDasharray="4 2" fill="none" />
        </svg>
      </System>
    </Footer>
  );
}

export default function App() {
  return (
    <Screen>
      <Global />
      <StockHeader />
      <QuotePanel />
      <Divider />
      <News />
      <Band />
      <Periods />
      <Market>
        <Charts />
        <OrderBook />
      </Market>
      <Interact />
      <Band />
      <Sections />
      <Bottom />
    </Screen>
  );
}
